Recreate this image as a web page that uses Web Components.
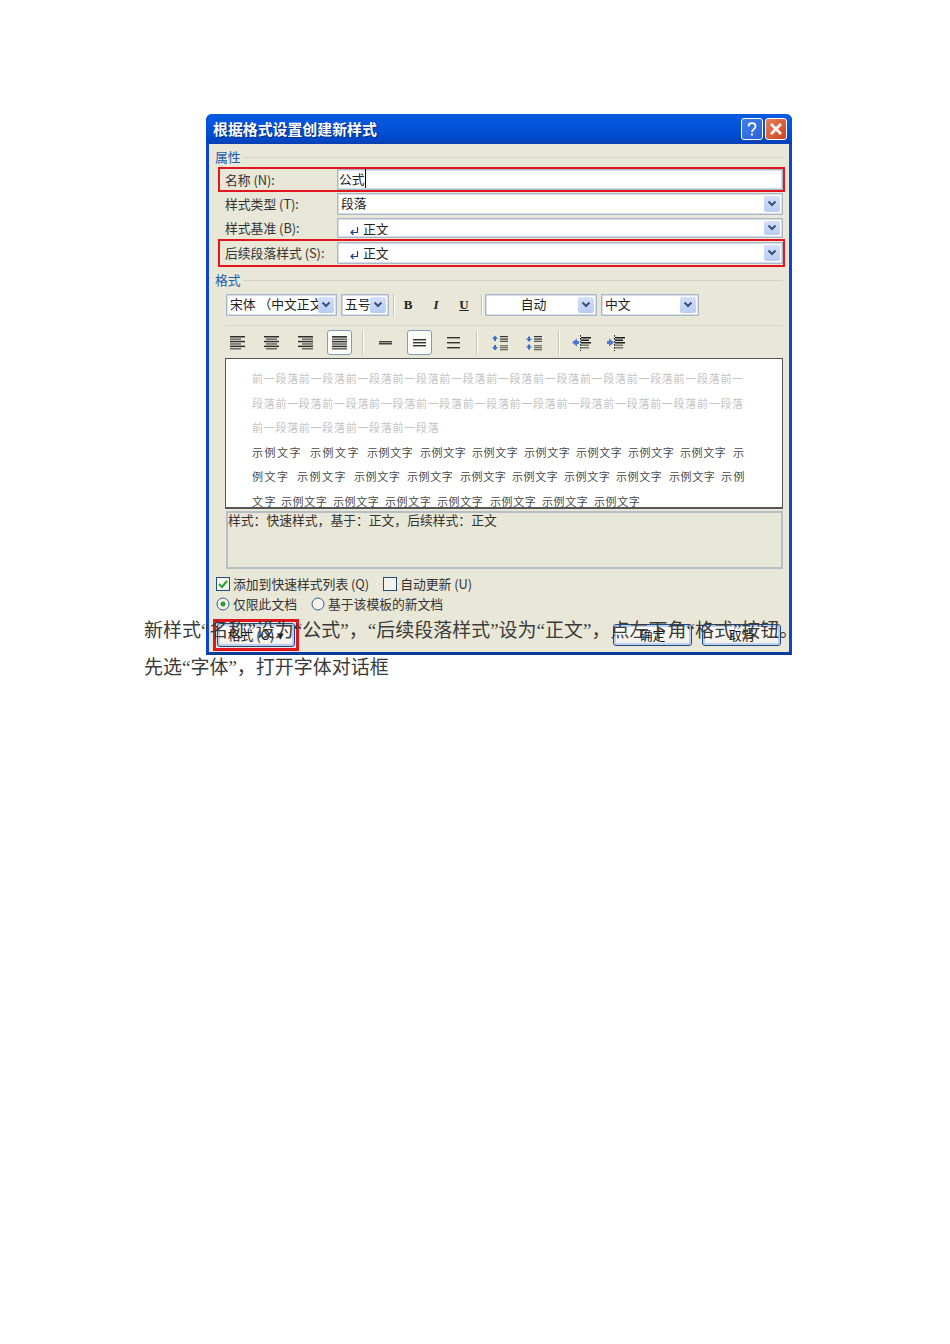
<!DOCTYPE html>
<html lang="zh">
<head>
<meta charset="utf-8">
<title>新样式</title>
<style>
    html, body { margin: 0; background: #fff; }
</style>
</head>
<body>
<doc-page>
    <style-dialog></style-dialog>
    <p>新样式“名称”设为“公式”，“后续段落样式”设为“正文”，点左下角“格式”按钮。</p>
    <p>先选“字体”，打开字体对话框</p>
</doc-page>

<script>
const UI_FONT = `"Noto Sans CJK SC", "Liberation Sans", sans-serif`;

class DocPage extends HTMLElement {
    constructor() {
        super();
        this.attachShadow({ mode: 'open' });
        this.shadowRoot.innerHTML = `
        <style>
            :host {
                display: block;
                width: 950px;
                height: 1344px;
                box-sizing: border-box;
                padding: 114px 0 0 206px;
                overflow: hidden;
            }
            .text {
                margin: -43px 0 0 -62px;
                width: 700px;
                font: 19px/37px "Liberation Serif", "Noto Sans CJK SC", serif;
                color: #3a3a3a;
                position: relative;
            }
            ::slotted(p) { margin: 0; white-space: nowrap; }
        </style>
        <slot name="dialog"></slot>
        <div class="text"><slot></slot></div>
        `;
        this.querySelector('style-dialog').slot = 'dialog';
    }
}

class ComboBox extends HTMLElement {
    constructor() {
        super();
        this.attachShadow({ mode: 'open' });
        this.shadowRoot.innerHTML = `
        <style>
            :host {
                display: flex;
                box-sizing: border-box;
                height: 22px;
                background: #fff;
                border: 1px solid #a9b7c9;
                box-shadow: inset 0 0 0 1px #d5dde6;
                padding: 2px;
                font: 12.8px/16px ${UI_FONT};
                color: #222;
                overflow: hidden;
            }
            .value { flex: 1; padding-left: 1px; margin-top: var(--lift, 0); white-space: nowrap; overflow: hidden; text-align: var(--align, left); }
            .btn {
                flex: none;
                width: 16px;
                background: linear-gradient(#d5e0f8, #b8ccf5);
                border-radius: 2px;
                display: flex;
                align-items: center;
                justify-content: center;
            }
            svg { width: 10px; height: 8px; }
        </style>
        <div class="value"><slot></slot></div>
        <div class="btn"><svg viewBox="0 0 10 8"><path d="M1.5 1.5 5 5l3.5-3.5" fill="none" stroke="#3a4f7a" stroke-width="2"/></svg></div>
        `;
    }
}

class TextField extends HTMLElement {
    constructor() {
        super();
        this.attachShadow({ mode: 'open' });
        this.shadowRoot.innerHTML = `
        <style>
            :host {
                display: block;
                box-sizing: border-box;
                height: 21px;
                background: #fff;
                border: 1px solid #a9b7c9;
                box-shadow: inset 0 0 0 1px #d5dde6;
                padding: 1px 1px;
                font: 12.8px/16px ${UI_FONT};
                color: #222;
            }
            span { border-right: 1px solid #000; }
        </style>
        <span><slot></slot></span>
        `;
    }
}

class ParaMark extends HTMLElement {
    constructor() {
        super();
        this.attachShadow({ mode: 'open' });
        this.shadowRoot.innerHTML = `
        <style>
            :host { display: inline-block; width: 11px; margin: 0 3px 0 8px; vertical-align: -2px; }
            svg { display: block; width: 10px; height: 10px; }
        </style>
        <svg viewBox="0 0 10 10"><path d="M8.5 1v5.5H2.5M4.5 4 2 6.5 4.5 9" fill="none" stroke="#1c3f80" stroke-width="1.2"/></svg>
        `;
    }
}

class FormField extends HTMLElement {
    constructor() {
        super();
        this.attachShadow({ mode: 'open' });
        this.shadowRoot.innerHTML = `
        <style>
            :host {
                display: grid;
                grid-template-columns: 112px 446px;
                align-items: center;
                margin-left: 11px;
                width: 563px;
                box-sizing: border-box;
                padding-left: 5px;
                font: 12.8px/16px ${UI_FONT};
                color: #333;
                white-space: nowrap;
            }
            :host([marked]) { outline: 2px solid #e0161c; }
        </style>
        <div><slot name="label"></slot></div>
        <slot></slot>
        `;
    }
}

class SectionTitle extends HTMLElement {
    constructor() {
        super();
        this.attachShadow({ mode: 'open' });
        this.shadowRoot.innerHTML = `
        <style>
            :host {
                display: flex;
                align-items: center;
                gap: 3px;
                height: 14px;
                font: 12.8px/14px ${UI_FONT};
                color: #1d5bb0;
            }
            i { flex: 1; border-top: 1px solid #d5d2c0; }
        </style>
        <slot></slot><i></i>
        `;
    }
}

class ToolIcon extends HTMLElement {
    constructor() {
        super();
        this.attachShadow({ mode: 'open' });
        const kind = this.getAttribute('kind');
        const bar = (x, y, w, h = 1, c = '#444') => `<rect x="${x}" y="${y}" width="${w}" height="${h}" fill="${c}"/>`;
        const tone = i => (i % 2 ? '#6a6a62' : '#2e2e2e');
        const ys = [1, 3.4, 5.8, 8.2, 10.6, 13];
        let art = '';
        if (kind === 'left') art = ys.map((y, i) => bar(2, y, i % 2 ? 11 : 15, 1.5, tone(i))).join('');
        if (kind === 'center') art = ys.map((y, i) => bar(i % 2 ? 4 : 2, y, i % 2 ? 11 : 15, 1.5, tone(i))).join('');
        if (kind === 'right') art = ys.map((y, i) => bar(i % 2 ? 6 : 2, y, i % 2 ? 11 : 15, 1.5, tone(i))).join('');
        if (kind === 'justify') art = ys.map((y, i) => bar(2, y, 15, 1.6, tone(i))).join('');
        if (kind === 'single') art = bar(3, 6, 13, 1.5, '#444') + bar(3, 8, 13, 1.5, '#444');
        if (kind === 'half') art = bar(3, 4, 13, 1.4, '#333') + bar(3, 7, 13, 1.4, '#333') + bar(3, 10, 13, 1.4, '#333');
        if (kind === 'double') art = bar(3, 2, 13, 1.4, '#333') + bar(3, 7, 13, 1.4, '#333') + bar(3, 12, 13, 1.4, '#333');
        if (kind === 'para-up' || kind === 'para-down') {
            const blue = '#3a70c8';
            const up = y => `<path d="M5 ${y} 2 ${y + 3.5}h6z" fill="${blue}"/>${bar(4, y + 3, 2, 2.5, blue)}`;
            const down = y => `<path d="M5 ${y} 2 ${y - 3.5}h6z" fill="${blue}"/>${bar(4, y - 5.5, 2, 2.5, blue)}`;
            const lines = bar(10, 1, 8, 1.2, '#333') + bar(10, 3.5, 8, 1.2, '#333') + bar(10, 5.8, 8, 1, '#333')
                + bar(10, 10, 8, 1.4, '#77776e') + bar(10, 12, 8, 1.4, '#77776e') + bar(10, 14, 8, 1.4, '#77776e');
            art = (kind === 'para-up' ? up(0.5) + down(15.5) : down(7) + up(9)) + lines;
        }
        if (kind === 'outdent' || kind === 'indent') {
            const arrow = kind === 'outdent'
                ? `<path d="M0 7.5 5 3.500v2.500h2v3H5v2.500z" fill="#4a7ad0"/>`
                : `<path d="M8 7.500 3 3.500v2.500H1v3h2v2.500z" fill="#4a7ad0"/>`;
            let dash = '';
            for (let y = 0; y < 16; y += 3) dash += bar(8, y, 1, 1.6, '#222');
            art = arrow + dash
                + bar(9, 2, 10, 1.5, '#1c1c1c') + bar(9, 4.5, 8, 1.5, '#1c1c1c') + bar(9, 7, 10, 1.5, '#1c1c1c')
                + bar(9, 9.5, 8, 1.5, '#77776e') + bar(9, 12, 8, 1.5, '#77776e');
        }
        this.shadowRoot.innerHTML = `
        <style>
            :host {
                display: flex;
                align-items: center;
                justify-content: center;
                box-sizing: border-box;
                width: 25px;
                height: 25px;
                border-radius: 3px;
                border: 1px solid transparent;
            }
            :host([active]) { background: #fbfbf7; border: 1px solid #7f9db9; box-shadow: inset 0 0 0 1px #fff; }
            svg { display: block; width: 19px; height: 16px; flex: none; }
        </style>
        <svg viewBox="0 0 19 16">${art}</svg>
        `;
    }
}

class XpButton extends HTMLElement {
    constructor() {
        super();
        this.attachShadow({ mode: 'open' });
        this.shadowRoot.innerHTML = `
        <style>
            :host {
                display: flex;
                align-items: center;
                justify-content: center;
                box-sizing: border-box;
                width: 79px;
                height: 22px;
                border: 1px solid #1f4a80;
                border-radius: 3px;
                background: linear-gradient(#fff, #f1efe6);
                box-shadow: inset 0 0 0 2px #bcd0ee;
                font: 12.8px/16px ${UI_FONT};
                color: #111;
                white-space: nowrap;
            }
        </style>
        <slot></slot>
        `;
    }
}

class CheckOption extends HTMLElement {
    constructor() {
        super();
        this.attachShadow({ mode: 'open' });
        const radio = this.getAttribute('type') === 'radio';
        const on = this.hasAttribute('checked');
        const mark = radio
            ? `<circle cx="7" cy="7" r="6" fill="#f4f3ec" stroke="#2f5f8f"/>${on ? '<circle cx="7" cy="7" r="2.5" fill="#2f9a3a"/>' : ''}`
            : `<rect x=".5" y=".5" width="13" height="13" fill="#f4f3ec" stroke="#1f4f80"/>${on ? '<path d="M3 7l3 3 5-6" fill="none" stroke="#22a030" stroke-width="2"/>' : ''}`;
        this.shadowRoot.innerHTML = `
        <style>
            :host {
                display: inline-flex;
                align-items: center;
                gap: 3px;
                font: 12.8px/16px ${UI_FONT};
                color: #333;
                white-space: nowrap;
            }
            svg { display: block; width: 14px; height: 14px; flex: none; }
        </style>
        <svg viewBox="0 0 14 14">${mark}</svg><slot></slot>
        `;
    }
}

class StylePreview extends HTMLElement {
    constructor() {
        super();
        this.attachShadow({ mode: 'open' });
        const before = '前一段落';
        // each sample group is [text, distance to the next group]
        const row = groups => groups.map(([text, step]) =>
            `<span style="width:${step}px;letter-spacing:${step > 56 || text.length < 4 ? 1.5 : .6}px">${text}</span>`).join('');
        const s = '示例文字';
        const line1 = [[s, 58], [s, 57], [s, 53], [s, 52], [s, 52], [s, 52], [s, 52], [s, 52], [s, 53], ['示', 12]];
        const line2 = [['例文字', 45], [s, 57], [s, 53], [s, 53], [s, 52], [s, 52], [s, 52], [s, 53], [s, 52], ['示例', 24]];
        const line3 = [['文字', 29], [s, 52], [s, 52], [s, 52], [s, 53], [s, 52], [s, 52], [s, 52]];
        this.shadowRoot.innerHTML = `
        <style>
            :host {
                display: block;
                box-sizing: border-box;
                width: 558px;
                height: 151px;
                background: #fff;
                border: 1px solid #555;
                border-bottom-width: 2px;
                padding: 7px 0 0 26px;
                overflow: hidden;
                font: 11px/24.5px ${UI_FONT};
                white-space: nowrap;
            }
            .grey { color: #c4c4c4; letter-spacing: .71px; }
            .black { color: #4a4a4a; display: flex; }
            .black span { flex: none; overflow: visible; }
        </style>
        <div class="grey">${before.repeat(10)}前一</div>
        <div class="grey">段落${before.repeat(10)}</div>
        <div class="grey">${before.repeat(4)}</div>
        <div class="black">${row(line1)}</div>
        <div class="black">${row(line2)}</div>
        <div class="black">${row(line3)}</div>
        `;
    }
}

class StyleDialog extends HTMLElement {
    constructor() {
        super();
        this.attachShadow({ mode: 'open' });
        this.shadowRoot.innerHTML = `
        <style>
            :host {
                display: block;
                box-sizing: border-box;
                width: 586px;
                height: 541px;
                background: #e9e7d8;
                border: solid #0a46d0;
                border-width: 0 3px 3px;
                border-bottom-color: #0a3a9a;
                border-radius: 6px 6px 0 0;
                font: 12.8px/16px ${UI_FONT};
            }
            .title {
                height: 30px;
                margin: 0 -3px;
                padding: 0 5px 0 7px;
                border-radius: 6px 6px 0 0;
                background: linear-gradient(#0a5be0, #0453dc 40%, #0048c8 85%, #0a3fb0);
                display: flex;
                align-items: center;
                color: #fff;
                font-weight: 700;
                font-size: 14.9px;
                text-shadow: 1px 1px 1px #0a2c80;
            }
            .title span { flex: 1; }
            .cap {
                width: 22px;
                height: 22px;
                margin-left: 2px;
                border: 1px solid #fff;
                border-radius: 3px;
                box-sizing: border-box;
            }
            .cap svg { display: block; width: 20px; height: 20px; }
            .help { background: linear-gradient(135deg, #3f7fe8, #2c62d8); }
            .close { background: linear-gradient(135deg, #e8805a, #c8451f); }
            .sec { margin: 6px 6px 0 6px; }
            form-field { height: 22px; }
            .f1 { margin-top: 5px; height: 21px; }
            .f2 { margin-top: 3px; }
            .f3 { margin-top: 3px; height: 20px; }
            .f4 { margin-top: 3px; height: 24px; }
            .sec2 { margin-top: 8px; }
            .combo-row { width: 446px; }
            .bar1 {
                display: flex;
                align-items: center;
                height: 22px;
                margin: 7px 6px 0 17px;
                gap: 4px;
                --lift: -1px;
            }
            .sep { width: 1px; height: 22px; background: #c8c5b2; box-shadow: 1px 0 0 #fff; flex: none; }
            .fmt { font: 700 13px/16px "Liberation Serif", serif; width: 28px; text-align: center; color: #222; flex: none; margin-left: -4px; }
            .rule { height: 1px; background: #d8d5c4; margin: 9px 6px 0 16px; }
            .bar2 { display: flex; align-items: center; height: 25px; margin: 4px 0 0 16px; gap: 9px; }
            .bar2 .sep { height: 24px; margin: 0 1px; }
            style-preview { margin: 3px 0 0 16px; }
            .desc {
                box-sizing: border-box;
                margin: 2px 0 0 17px;
                width: 557px;
                height: 58px;
                border: 2px solid #b4bec4;
                font: 12.8px/13px ${UI_FONT};
                color: #333;
            }
            .opts { display: flex; gap: 14px; margin: 7px 0 0 7px; height: 16px; }
            .opts.r2 { margin-top: 4px; }
            .foot { display: flex; align-items: center; margin: 7px 0 0 4px; }
            .mark { border: 3px solid #e0161c; padding: 1px; margin-right: 314px; }
            .mark xp-button { width: 78px; height: 24px; }
            .foot > xp-button + xp-button { margin-left: 10px; }
        </style>
        <div class="title">
            <span>根据格式设置创建新样式</span>
            <div class="cap help"><svg viewBox="0 0 20 20"><path d="M6.500 7.500c0-4.500 7-4.500 7 0 0 3-3.500 2.500-3.500 5.500" fill="none" stroke="#fff" stroke-width="1.800"/><rect x="9" y="14.500" width="2" height="2" fill="#fff"/></svg></div>
            <div class="cap close"><svg viewBox="0 0 20 20"><path d="M5 5l10 10M15 5 5 15" stroke="#fff" stroke-width="2.600"/></svg></div>
        </div>

        <section-title class="sec">属性</section-title>
        <form-field class="f1" marked>
            <span slot="label">名称 (N):</span>
            <text-field>公式</text-field>
        </form-field>
        <form-field class="f2">
            <span slot="label">样式类型 (T):</span>
            <combo-box class="combo-row" style="--lift:-1px">段落</combo-box>
        </form-field>
        <form-field class="f3">
            <span slot="label">样式基准 (B):</span>
            <combo-box class="combo-row" style="height:20px"><para-mark></para-mark>正文</combo-box>
        </form-field>
        <form-field class="f4" marked>
            <span slot="label">后续段落样式 (S):</span>
            <combo-box class="combo-row"><para-mark></para-mark>正文</combo-box>
        </form-field>

        <section-title class="sec sec2">格式</section-title>
        <div class="bar1">
            <combo-box style="width:111px">宋体 （中文正文</combo-box>
            <combo-box style="width:48px">五号</combo-box>
            <div class="sep"></div>
            <div class="fmt">B</div>
            <div class="fmt" style="font-style:italic">I</div>
            <div class="fmt" style="text-decoration:underline">U</div>
            <div class="sep" style="margin:0 -1px"></div>
            <combo-box style="width:112px;--align:center">自动</combo-box>
            <combo-box style="width:98px">中文</combo-box>
        </div>
        <div class="rule"></div>
        <div class="bar2">
            <tool-icon kind="left"></tool-icon>
            <tool-icon kind="center"></tool-icon>
            <tool-icon kind="right"></tool-icon>
            <tool-icon kind="justify" active></tool-icon>
            <div class="sep"></div>
            <tool-icon kind="single"></tool-icon>
            <tool-icon kind="half" active></tool-icon>
            <tool-icon kind="double"></tool-icon>
            <div class="sep"></div>
            <tool-icon kind="para-up"></tool-icon>
            <tool-icon kind="para-down"></tool-icon>
            <div class="sep" style="margin-left:3px"></div>
            <tool-icon kind="outdent"></tool-icon>
            <tool-icon kind="indent"></tool-icon>
        </div>
        <style-preview></style-preview>
        <div class="desc">样式：快速样式，基于：正文，后续样式：正文</div>
        <div class="opts">
            <check-option checked>添加到快速样式列表 (Q)</check-option>
            <check-option>自动更新 (U)</check-option>
        </div>
        <div class="opts r2">
            <check-option type="radio" checked>仅限此文档</check-option>
            <check-option type="radio">基于该模板的新文档</check-option>
        </div>
        <div class="foot">
            <div class="mark"><xp-button>格式 (O) ▾</xp-button></div>
            <xp-button>确定</xp-button>
            <xp-button>取消</xp-button>
        </div>
        `;
    }
}

customElements.define('combo-box', ComboBox);
customElements.define('text-field', TextField);
customElements.define('para-mark', ParaMark);
customElements.define('form-field', FormField);
customElements.define('section-title', SectionTitle);
customElements.define('tool-icon', ToolIcon);
customElements.define('xp-button', XpButton);
customElements.define('check-option', CheckOption);
customElements.define('style-preview', StylePreview);
customElements.define('style-dialog', StyleDialog);
customElements.define('doc-page', DocPage);
</script>
</body>
</html>
